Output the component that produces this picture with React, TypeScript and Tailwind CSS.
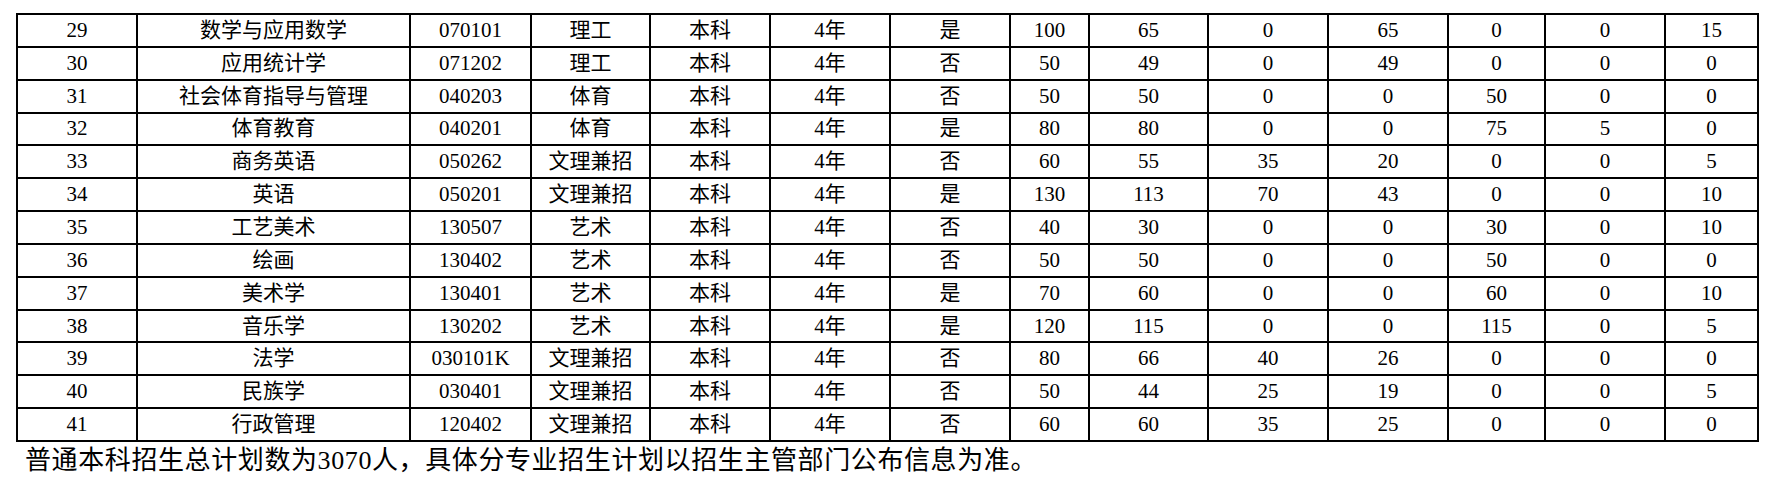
import React from "react";

const rows: (string | number)[][] = [
  [29, "数学与应用数学", "070101", "理工", "本科", "4年", "是", 100, 65, 0, 65, 0, 0, 15],
  [30, "应用统计学", "071202", "理工", "本科", "4年", "否", 50, 49, 0, 49, 0, 0, 0],
  [31, "社会体育指导与管理", "040203", "体育", "本科", "4年", "否", 50, 50, 0, 0, 50, 0, 0],
  [32, "体育教育", "040201", "体育", "本科", "4年", "是", 80, 80, 0, 0, 75, 5, 0],
  [33, "商务英语", "050262", "文理兼招", "本科", "4年", "否", 60, 55, 35, 20, 0, 0, 5],
  [34, "英语", "050201", "文理兼招", "本科", "4年", "是", 130, 113, 70, 43, 0, 0, 10],
  [35, "工艺美术", "130507", "艺术", "本科", "4年", "否", 40, 30, 0, 0, 30, 0, 10],
  [36, "绘画", "130402", "艺术", "本科", "4年", "否", 50, 50, 0, 0, 50, 0, 0],
  [37, "美术学", "130401", "艺术", "本科", "4年", "是", 70, 60, 0, 0, 60, 0, 10],
  [38, "音乐学", "130202", "艺术", "本科", "4年", "是", 120, 115, 0, 0, 115, 0, 5],
  [39, "法学", "030101K", "文理兼招", "本科", "4年", "否", 80, 66, 40, 26, 0, 0, 0],
  [40, "民族学", "030401", "文理兼招", "本科", "4年", "否", 50, 44, 25, 19, 0, 0, 5],
  [41, "行政管理", "120402", "文理兼招", "本科", "4年", "否", 60, 60, 35, 25, 0, 0, 0],
];

const widths = ["w-[120px]", "w-[273px]", "w-[121px]", "w-[119px]", "w-[120px]", "w-[120px]", "w-[120px]", "w-[79px]", "w-[119px]", "w-[120px]", "w-[120px]", "w-[97px]", "w-[120px]", "w-[93px]"];

export default function App() {
  return (
    <div className="w-[1773px] h-[483px] bg-white text-black overflow-hidden" style={{ fontFamily: '"Liberation Serif", "Noto Sans CJK SC", serif' }}>
      <div className="pt-[13px] pl-[16px]">
        <table className="table-fixed border-collapse w-[1741px] border-2 border-black">
          <colgroup>
            {widths.map((w, i) => (
              <col key={i} className={w} />
            ))}
          </colgroup>
          <tbody>
            {rows.map((r, ri) => (
              <tr key={ri} className="h-[32.85px]">
                {r.map((c, ci) => (
                  <td key={ci} className="border-2 border-black text-center text-[21px] leading-none p-0 align-middle">
                    {c}
                  </td>
                ))}
              </tr>
            ))}
          </tbody>
        </table>
        <div className="pl-[9px] pt-[4px] text-[26px] leading-[30px] tracking-[0.6px] whitespace-nowrap">
          普通本科招生总计划数为3070人，具体分专业招生计划以招生主管部门公布信息为准。
        </div>
      </div>
    </div>
  );
}
